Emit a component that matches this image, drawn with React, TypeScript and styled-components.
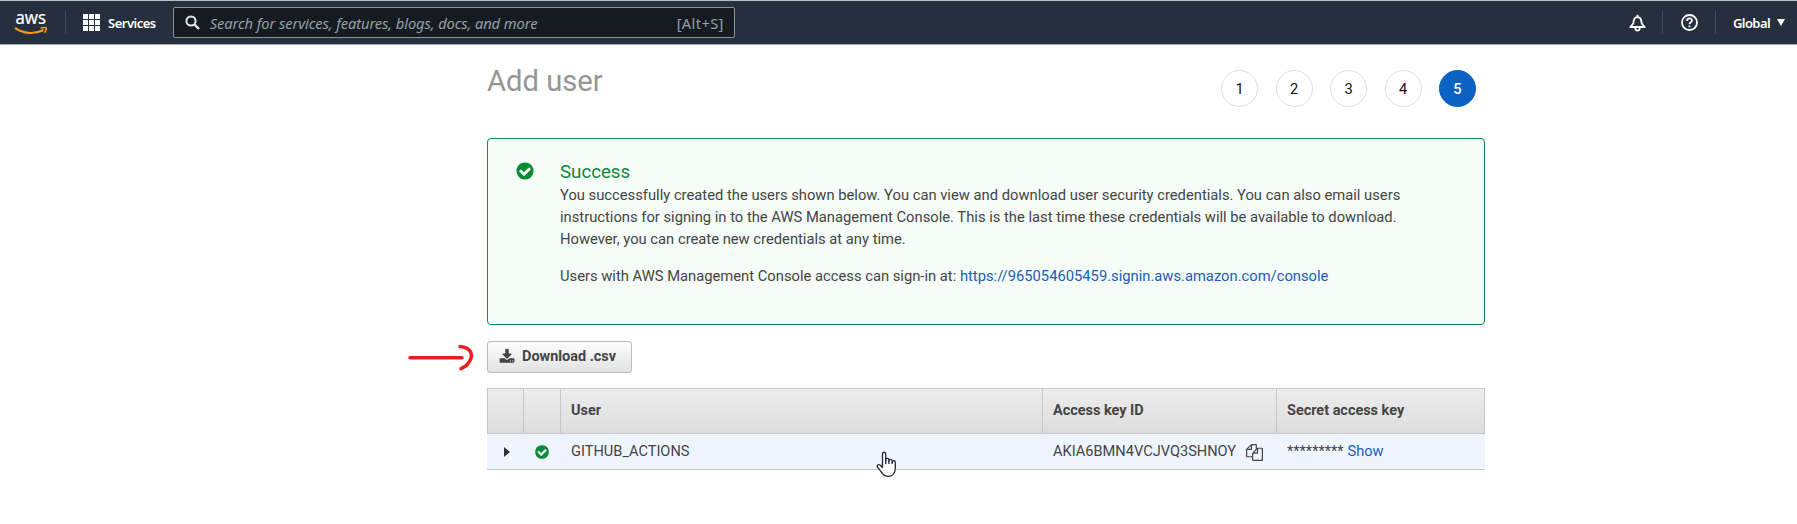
import React from "react";
import styled, { createGlobalStyle } from "styled-components";

const GlobalStyle = createGlobalStyle`
  * { box-sizing: border-box; }
  body { margin: 0; background: #fff; color: #444; font: 14.67px/22px Roboto, "Liberation Sans", sans-serif; }
`;

const Page = styled.div`
  position: relative;
  height: 524px;
  overflow: hidden;
`;

const TopBar = styled.header`
  display: flex;
  align-items: center;
  height: 45px;
  padding: 0 12px 0 14px;
  background: #252f3e;
  background-clip: padding-box;
  border-top: 1px solid #b3c0c9;
  border-bottom: 1px solid #a7a7aa;
  color: #fff;
  font-family: "Noto Sans", "Open Sans", sans-serif;
`;

const Logo = styled.div`
  width: 34px;
  height: 24px;
  svg { display: block; overflow: visible; }
`;

const Divider = styled.i<{ $left: number; $right: number }>`
  width: 1px;
  height: 23px;
  margin: 0 ${(p) => p.$right}px 0 ${(p) => p.$left}px;
  background: #414b5a;
`;

const Dots = styled.span`
  display: grid;
  grid-template-columns: repeat(3, 5px);
  gap: 1px;
  margin-right: 8px;
  i { height: 5px; background: #fff; }
`;

const NavLabel = styled.span<{ $spacing: number }>`
  font-size: 13px;
  font-weight: 600;
  line-height: 20px;
  letter-spacing: ${(p) => p.$spacing}px;
  white-space: nowrap;
`;

const SearchBox = styled.div`
  display: flex;
  align-items: center;
  width: 562px;
  height: 31px;
  margin-left: 17px;
  padding: 0 10px 0 11px;
  background: #161b22;
  border: 1px solid #879596;
  border-radius: 2px;
  font-size: 14.7px;
  line-height: 20px;
  color: #95a0a4;
  white-space: nowrap;
`;

const Placeholder = styled.span`
  flex: 1;
  margin-left: 10px;
  font-style: italic;
  letter-spacing: -0.09px;
`;

const Shortcut = styled.span`
  letter-spacing: 0.35px;
`;

const Tools = styled.div`
  display: flex;
  align-items: center;
  margin-left: auto;
`;

const Caret = styled.i`
  margin-left: 7px;
  border: 4px solid transparent;
  border-top: 7px solid #fff;
  border-bottom: 0;
`;

const Main = styled.main`
  width: 998px;
  margin-left: 487px;
`;

const Heading = styled.div`
  display: flex;
  justify-content: space-between;
  height: 93px;
  padding: 17px 9px 0 0;
`;

const Title = styled.h1`
  margin: 0;
  font-size: 29.2px;
  font-weight: 400;
  line-height: 38px;
  color: #959595;
`;

const Steps = styled.ol`
  display: flex;
  gap: 17.5px;
  margin: 8px 0 0;
  padding: 0;
  list-style: none;
`;

const Step = styled.li<{ $active?: boolean }>`
  display: flex;
  align-items: center;
  justify-content: center;
  width: 37px;
  height: 37px;
  border: 1px solid ${(p) => (p.$active ? "#0a62c4" : "#dedede")};
  border-radius: 50%;
  background: ${(p) => (p.$active ? "#0a62c4" : "#fff")};
  color: ${(p) => (p.$active ? "#fff" : "#111")};
  font-weight: ${(p) => (p.$active ? 500 : 400)};
`;

const Alert = styled.section`
  display: flex;
  height: 187px;
  padding: 22px 27px 0;
  background: #f6fcf7;
  border: 1px solid #118a45;
  border-radius: 4px;
  font-size: 14.76px;
`;

const AlertBody = styled.div`
  margin-left: 25px;
  h2 { margin: 0; font-size: 18.7px; line-height: 23px; font-weight: 400; color: #0d8840; }
  p { margin: 0 0 15px; white-space: nowrap; }
`;

const Link = styled.a`
  color: #1a5dba;
`;

const Icon = styled.svg<{ $size: number; $color: string }>`
  flex: none;
  display: block;
  width: ${(p) => p.$size}px;
  height: ${(p) => p.$size}px;
  fill: ${(p) => p.$color};
`;

const Button = styled.button`
  display: flex;
  align-items: center;
  gap: 7px;
  width: 145px;
  height: 32px;
  margin: 16px 0 15px;
  padding: 0 0 0 11px;
  background: linear-gradient(#fdfdfd, #e2e2e2);
  border: 1px solid #bcbcbc;
  border-radius: 3px;
  color: #444;
  font: 700 14.45px/20px Roboto, sans-serif;
  white-space: nowrap;
`;

const Row = styled.div<{ $head?: boolean }>`
  display: grid;
  grid-template-columns: 36px 37px 482px 234px 1fr;
  height: ${(p) => (p.$head ? 46 : 36)}px;
  background: ${(p) => (p.$head ? "linear-gradient(#ededed, #dcdddc)" : "#eff5fe")};
  border-bottom: 1px solid #c6c9cc;
  border-top: ${(p) => (p.$head ? "1px solid #c6c6c6" : "0")};
  border-right: 1px solid ${(p) => (p.$head ? "#c6c6c6" : "#eff5fe")};
  font-size: ${(p) => (p.$head ? 14.45 : 14.6)}px;
  font-weight: ${(p) => (p.$head ? 700 : 400)};
`;

const Cell = styled.div<{ $line?: boolean; $center?: boolean }>`
  display: flex;
  align-items: center;
  justify-content: ${(p) => (p.$center ? "center" : "flex-start")};
  padding-left: ${(p) => (p.$center ? 0 : 10)}px;
  padding-bottom: ${(p) => (p.$line || p.$center ? 0 : 2)}px;
  border-left: 1px solid ${(p) => (p.$line ? "#c6c6c6" : "transparent")};
  white-space: nowrap;
`;

const Expand = styled.i`
  margin-left: 2px;
  border: 5px solid transparent;
  border-left: 6px solid #333;
  border-right: 0;
`;

const Mask = styled.span`
  margin-right: 4px;
`;

const Annotation = styled.svg`
  position: absolute;
  left: 404px;
  top: 340px;
`;

const Pointer = styled.svg`
  position: absolute;
  left: 875px;
  top: 450px;
`;

const CHECK =
  "M1412 734q0-28-18-46l-91-90q-19-19-45-19t-45 19l-408 407-226-226q-19-19-45-19t-45 19l-91 90q-18 18-18 46 0 27 18 45l362 362q19 19 45 19 27 0 46-19l543-543q18-18 18-45zm252 162q0 209-103 385.5t-279.5 279.5-385.5 103-385.5-103-279.5-279.5-103-385.5 103-385.5 279.5-279.5 385.5-103 385.5 103 279.5 279.5 103 385.5z";
const DOWNLOAD =
  "M1344 1344q0-26-19-45t-45-19-45 19-19 45 19 45 45 19 45-19 19-45zm256 0q0-26-19-45t-45-19-45 19-19 45 19 45 45 19 45-19 19-45zm128-224v320q0 40-28 68t-68 28h-1472q-40 0-68-28t-28-68v-320q0-40 28-68t68-28h465l135 136q58 56 136 56t136-56l136-136h464q40 0 68 28t28 68zm-325-569q17 41-14 70l-448 448q-18 19-45 19t-45-19l-448-448q-31-29-14-70 17-39 59-39h256v-448q0-26 19-45t45-19h256q26 0 45 19t19 45v448h256q42 0 59 39z";
const COPY =
  "M1696 384q40 0 68 28t28 68v1216q0 40-28 68t-68 28h-960q-40 0-68-28t-28-68v-288h-544q-40 0-68-28t-28-68v-672q0-40 20-88t48-76l408-408q28-28 76-48t88-20h416q40 0 68 28t28 68v328q68-40 128-40h416zm-544 213l-299 299h299v-299zm-640-384l-299 299h299v-299zm196 647l316-316v-416h-384v416q0 40-28 68t-68 28h-416v640h512v-256q0-40 20-88t48-76zm956 804v-1152h-384v416q0 40-28 68t-68 28h-416v640h896z";

const CopySlot = styled.span`
  margin: 4px 0 0 10px;
`;

const headers = ["", "", "User", "Access key ID", "Secret access key"];

export default function App() {
  return (
    <Page>
      <GlobalStyle />
      <TopBar>
        <Logo>
          <svg width="34" height="24" viewBox="0 0 34 24">
            <text x="1.5" y="13" fontSize="18" fill="#fff" stroke="#fff" strokeWidth="0.2" textLength="30.5" lengthAdjust="spacingAndGlyphs">aws</text>
            <path d="M1 16.8C9 22.6 20 23.8 29.5 19" fill="none" stroke="#f79a1c" strokeWidth="2.2" />
            <path d="M26.5 17Q31 16 32.3 17Q32.8 18.8 30.5 21.8" fill="none" stroke="#f79a1c" strokeWidth="1.6" />
          </svg>
        </Logo>
        <Divider $left={17} $right={17} />
        <Dots>{Array.from({ length: 9 }, (_, i) => <i key={i} />)}</Dots>
        <NavLabel $spacing={-0.5}>Services</NavLabel>
        <SearchBox>
          <svg width="15" height="15" viewBox="0 0 15 15" fill="none" stroke="#e4e7e9" strokeWidth="2">
            <circle cx="6" cy="6" r="4.6" />
            <path d="M9.3 9.3L14 14" strokeWidth="2.4" />
          </svg>
          <Placeholder>Search for services, features, blogs, docs, and more</Placeholder>
          <Shortcut>[Alt+S]</Shortcut>
        </SearchBox>
        <Tools>
          <svg width="17" height="18" viewBox="0 0 17 18" fill="none" stroke="#fff" strokeWidth="1.8" strokeLinejoin="round">
            <path d="M1.3 13H15.7L12.7 9.5C12.4 6 12 3.2 8.5 3.2S4.6 6 4.3 9.5Z" />
            <path d="M8.5 3V.8M6.2 13.5C6.2 17.6 10.8 17.6 10.8 13.5" />
          </svg>
          <Divider $left={16} $right={18} />
          <svg width="17" height="17" viewBox="0 0 17 17" fill="none" stroke="#fff" strokeWidth="1.8">
            <circle cx="8.5" cy="8.5" r="7.5" />
            <path d="M6 7C6 3.4 11 3.6 11 6.5C11 8.2 8.5 8.2 8.5 10.2M8.5 11.4V13.2" />
          </svg>
          <Divider $left={17} $right={17} />
          <NavLabel $spacing={-0.6}>Global</NavLabel>
          <Caret />
        </Tools>
      </TopBar>
      <Main>
        <Heading>
          <Title>Add user</Title>
          <Steps>
            {[1, 2, 3, 4, 5].map((n) => <Step key={n} $active={n === 5}>{n}</Step>)}
          </Steps>
        </Heading>
        <Alert>
          <Icon $size={20} $color="#0a8a35" viewBox="0 0 1792 1792"><path d={CHECK} /></Icon>
          <AlertBody>
            <h2>Success</h2>
            <p>
              You successfully created the users shown below. You can view and download user security credentials. You can also email users<br />
              instructions for signing in to the AWS Management Console. This is the last time these credentials will be available to download.<br />
              However, you can create new credentials at any time.
            </p>
            <p>Users with AWS Management Console access can sign-in at: <Link>https://965054605459.signin.aws.amazon.com/console</Link></p>
          </AlertBody>
        </Alert>
        <Button>
          <Icon $size={16} $color="#444" viewBox="0 0 1792 1792"><path d={DOWNLOAD} /></Icon>
          Download .csv
        </Button>
        <Row $head>
          {headers.map((h, i) => <Cell key={i} $line>{h}</Cell>)}
        </Row>
        <Row>
          <Cell $center><Expand /></Cell>
          <Cell $center><Icon $size={16} $color="#0a8a35" viewBox="0 0 1792 1792"><path d={CHECK} /></Icon></Cell>
          <Cell>GITHUB_ACTIONS</Cell>
          <Cell>
            AKIA6BMN4VCJVQ3SHNOY
            <CopySlot><Icon $size={17} $color="#444" viewBox="0 0 1792 1792"><path d={COPY} /></Icon></CopySlot>
          </Cell>
          <Cell><Mask>*********</Mask><Link>Show</Link></Cell>
        </Row>
      </Main>
      <Annotation width="72" height="34" viewBox="0 0 72 34" fill="none" stroke="#ed1c1f" strokeWidth="3.5" strokeLinecap="round">
        <path d="M6 17.7H58M56 6.5C64 7 69 12 67 18C65.5 23 61 27 57 28.7" />
      </Annotation>
      <Pointer width="24" height="28" viewBox="0 0 24 28" fill="#fff" stroke="#222834" strokeWidth="1.3" strokeLinejoin="round">
        <path d="M7.5 16V4.2C7.5 1.6 10.7 1.6 10.7 4.2V10.5C10.7 7.6 13.9 8 13.9 10V11C14.2 8.6 17.2 8.9 17.2 11V12.2C17.5 10 20.3 10.3 20.3 12.8V18C20.3 23 17.5 26.4 13.2 26.4C9.5 26.4 8 24.7 6.4 22.2L2.5 17.2C1.2 15.5 3.4 13.6 5.3 15.2L7.5 17.5Z" />
        <path d="M10.7 10V14M13.9 10.5V14M17.2 11.5V14" />
      </Pointer>
    </Page>
  );
}
